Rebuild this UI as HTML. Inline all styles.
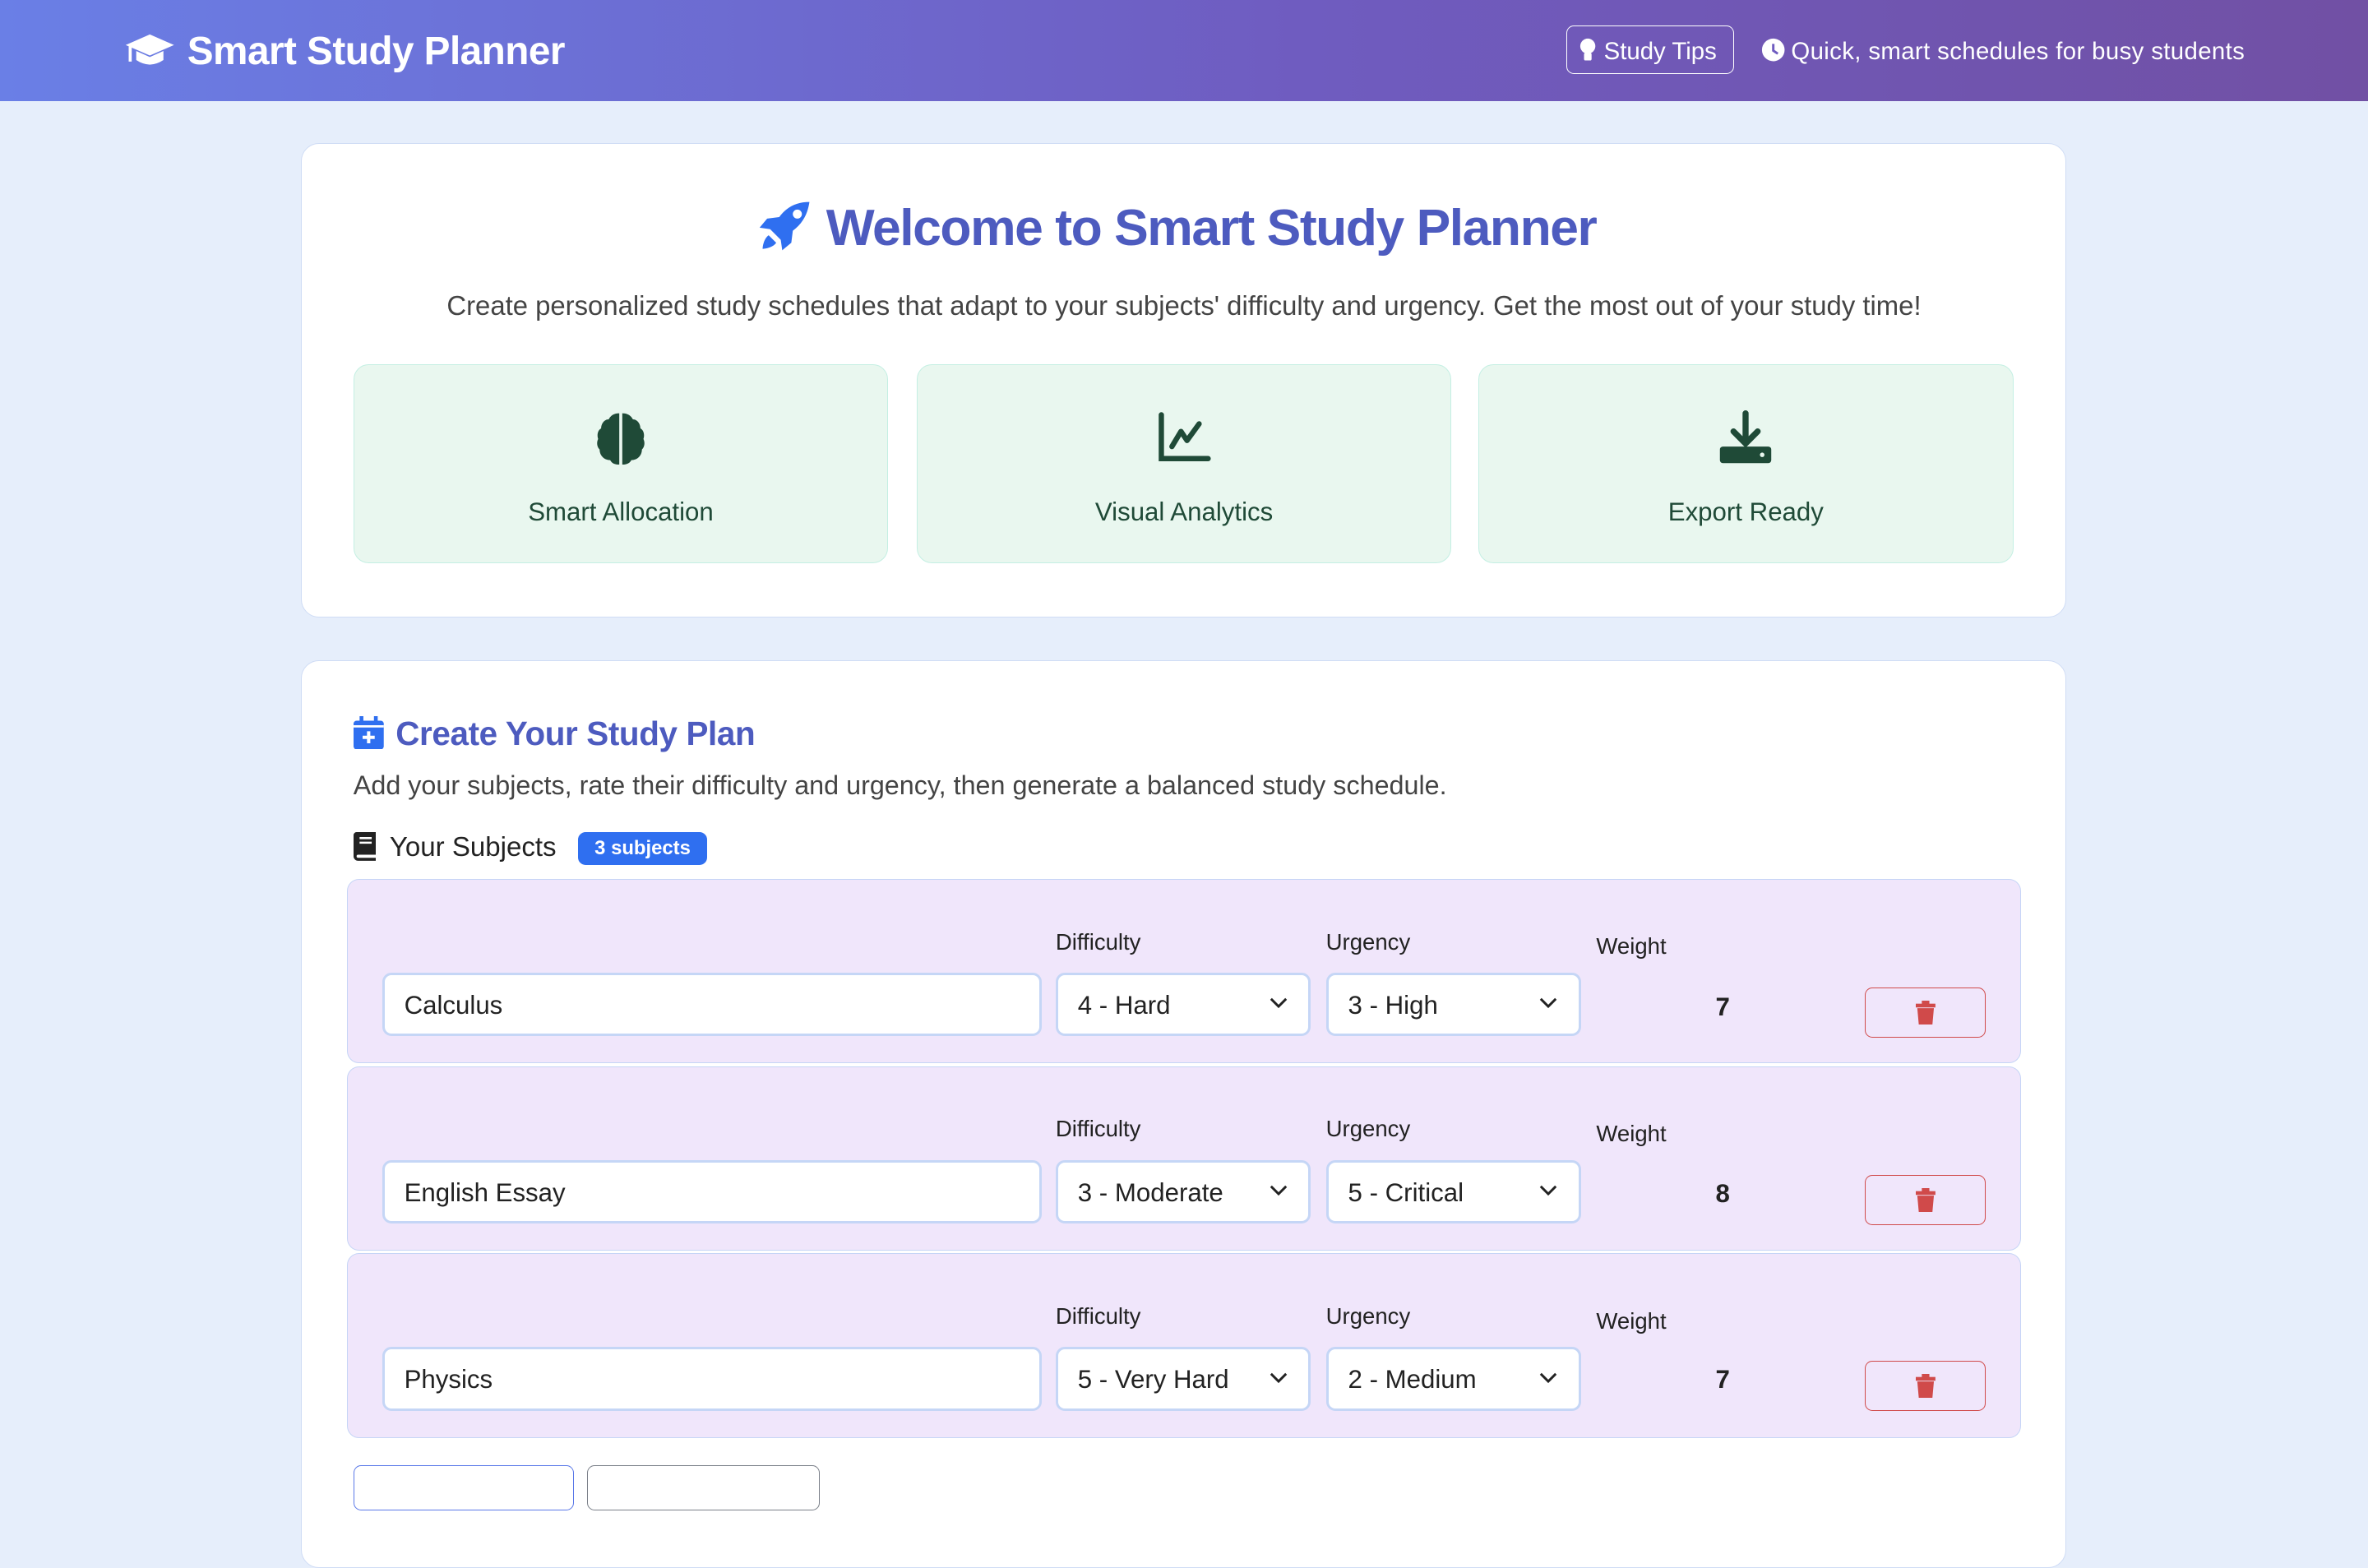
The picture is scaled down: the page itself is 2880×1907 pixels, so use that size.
<!DOCTYPE html>
<html><head><meta charset="utf-8"><style>
html{zoom:1.83674}
body{margin:0;width:1568px;height:980px;overflow:hidden;background:#e6eefb;font-family:"Liberation Sans",Arial,sans-serif;position:relative}
.a{position:absolute}
.hdr{left:0;top:0;width:1568px;height:67px;background:linear-gradient(90deg,#6a7fe6,#6f5cc0 55%,#7150a4);}
.card{background:#fff;border:1px solid #cfdcf5;border-radius:12px}
.feat{top:241px;width:353px;height:131px;background:#e9f7ef;border:1px solid #c4efe3;border-radius:10px;text-align:center;color:#1f4a37;font-size:17px}
.feat svg{position:absolute;left:50%;top:30px;transform:translateX(-50%)}
.feat span{position:absolute;left:0;right:0;top:88px}
.row{left:230px;width:1107px;height:121px;background:#f0e6fb;border:1px solid #c6d5f6;border-radius:8px}
.lbl{font-size:15px;color:#222}
.inp{height:42px;background:#fff;border:2px solid #c5d6f6;border-radius:6px;font-size:17px;color:#222;box-sizing:border-box;line-height:40px;padding-left:13px}
.chev{position:absolute;right:14px;top:15px}
.del{width:80px;height:33px;border:1px solid #d04a4a;border-radius:5px;box-sizing:border-box}
.del svg{position:absolute;left:33px;top:8px}
</style></head><body>
<div class="a hdr"></div>
<svg class="a" style="left:82px;top:22px" width="34" height="24" viewBox="0 0 34 24"><path d="M17 1 L33 8 L17 15 L1 8Z" fill="#fff"/><path d="M8 12 v6 q9 6 18 0 v-6 l-9 4z" fill="#fff"/><rect x="3" y="9" width="2" height="10" fill="#fff"/></svg>
<div class="a" style="left:124px;top:19px;color:#fff;font-size:26px;font-weight:bold;letter-spacing:-0.3px">Smart Study Planner</div>
<div class="a" style="left:1037px;top:17px;width:110px;height:31px;border:1px solid #fff;border-radius:5px"></div>
<svg class="a" style="left:1046px;top:25px" width="11" height="16" viewBox="0 0 11 16"><circle cx="5.5" cy="5.5" r="5" fill="#fff"/><rect x="3" y="10" width="5" height="5" rx="1" fill="#fff"/></svg>
<div class="a" style="left:1062px;top:25px;color:#fff;font-size:16px">Study Tips</div>
<svg class="a" style="left:1166px;top:25px" width="16" height="16"><circle cx="8" cy="8" r="7.5" fill="#fff"/><path d="M8 4v4.5l3 2" stroke="#6f5cc0" stroke-width="1.6" fill="none"/></svg>
<div class="a" style="left:1186px;top:25px;color:#fff;font-size:16px;letter-spacing:0.2px">Quick, smart schedules for busy students</div>

<div class="a card" style="left:199px;top:95px;width:1168px;height:313px"></div>
<svg class="a" style="left:502px;top:132px" width="36" height="36" viewBox="0 0 36 36"><path d="M34 2c-8 0-15 3-20 10l-8 1-5 6 7 1 7 7 1 7 6-5 1-8c7-5 10-12 11-19z" fill="#2f6ff0"/><circle cx="26" cy="10" r="3" fill="#fff"/><path d="M7 24c-3 2-4 7-4 9 2 0 7-1 9-4z" fill="#2f6ff0"/></svg>
<div class="a" style="left:547px;top:131px;color:#4d5bbf;font-size:34px;font-weight:bold;letter-spacing:-0.8px">Welcome to Smart Study Planner</div>
<div class="a" style="left:199px;width:1170px;top:192px;text-align:center;color:#444;font-size:17.9px">Create personalized study schedules that adapt to your subjects' difficulty and urgency. Get the most out of your study time!</div>
<div class="a feat" style="left:234px"><svg width="36" height="36" viewBox="0 0 36 36"><path d="M17 2c-4 0-6 2-7 4-3 0-5 3-5 6-2 1-3 4-2 7-1 2-1 5 1 7 0 4 3 7 7 7 1 2 3 3 6 3z M19 2c4 0 6 2 7 4 3 0 5 3 5 6 2 1 3 4 2 7 1 2 1 5-1 7 0 4-3 7-7 7-1 2-3 3-6 3z" fill="#1f4a37"/></svg><span>Smart Allocation</span></div>
<div class="a feat" style="left:607px"><svg width="36" height="36" viewBox="0 0 36 36"><path d="M3 3v29h31" stroke="#1f4a37" stroke-width="3.5" fill="none" stroke-linecap="round"/><path d="M10 24l6-10 4 6 8-11" stroke="#1f4a37" stroke-width="3.5" fill="none" stroke-linecap="round" stroke-linejoin="round"/></svg><span>Visual Analytics</span></div>
<div class="a feat" style="left:979px"><svg width="36" height="36" viewBox="0 0 36 36"><path d="M18 2v20M10 14l8 8 8-8" stroke="#1f4a37" stroke-width="4" fill="none" stroke-linecap="round"/><rect x="1" y="24" width="34" height="11" rx="2" fill="#1f4a37"/><circle cx="29" cy="29.5" r="1.5" fill="#e9f7ef"/></svg><span>Export Ready</span></div>

<div class="a card" style="left:199px;top:437px;width:1168px;height:600px"></div>
<svg class="a" style="left:234px;top:474px" width="20" height="22" viewBox="0 0 20 22"><rect x="0" y="3" width="20" height="19" rx="2" fill="#2f6ff0"/><rect x="4" y="0" width="2.5" height="5" fill="#2f6ff0"/><rect x="13.5" y="0" width="2.5" height="5" fill="#2f6ff0"/><rect x="0" y="6" width="20" height="1.5" fill="#fff"/><path d="M10 10v8M6 14h8" stroke="#fff" stroke-width="2.2"/></svg>
<div class="a" style="left:262px;top:473px;color:#4d5bbf;font-size:22px;font-weight:bold;letter-spacing:-0.2px">Create Your Study Plan</div>
<div class="a" style="left:234px;top:510px;color:#444;font-size:17.6px">Add your subjects, rate their difficulty and urgency, then generate a balanced study schedule.</div>
<svg class="a" style="left:234px;top:551px" width="15" height="19" viewBox="0 0 15 19"><path d="M2 0h13v15H3a1 1 0 000 2h12v2H3a3 3 0 01-3-3V2a2 2 0 012-2z" fill="#222"/><path d="M4 4h8M4 7h8" stroke="#fff" stroke-width="1.4"/></svg>
<div class="a" style="left:258px;top:551px;color:#222;font-size:18px">Your Subjects</div>
<div class="a" style="left:383px;top:551px;width:85px;height:22px;background:#2f6ff0;border-radius:5px;color:#fff;font-size:13px;font-weight:bold;text-align:center;line-height:22px">3 subjects</div>

<div class="a row" style="top:582px"></div>
<div class="a row" style="top:706px"></div>
<div class="a row" style="top:830px"></div>

<div class="a lbl" style="left:699px;top:615px">Difficulty</div><div class="a lbl" style="left:878px;top:615px">Urgency</div><div class="a lbl" style="left:1057px;top:618px">Weight</div>
<div class="a inp" style="left:253px;top:644px;width:437px">Calculus</div>
<div class="a inp" style="left:699px;top:644px;width:169px">4 - Hard<svg class="chev" width="12" height="8"><path d="M1 1l5 5 5-5" stroke="#222" stroke-width="1.6" fill="none"/></svg></div>
<div class="a inp" style="left:878px;top:644px;width:169px">3 - High<svg class="chev" width="12" height="8"><path d="M1 1l5 5 5-5" stroke="#222" stroke-width="1.6" fill="none"/></svg></div>
<div class="a" style="left:1136px;top:657px;font-size:17px;font-weight:bold;color:#222">7</div>
<div class="a del" style="left:1235px;top:654px"><svg width="13" height="16" viewBox="0 0 13 16"><rect x="0" y="2" width="13" height="2.5" fill="#d04a4a"/><rect x="4" y="0" width="5" height="3" fill="#d04a4a"/><path d="M1 5h11l-1 11H2z" fill="#d04a4a"/></svg></div>

<div class="a lbl" style="left:699px;top:739px">Difficulty</div><div class="a lbl" style="left:878px;top:739px">Urgency</div><div class="a lbl" style="left:1057px;top:742px">Weight</div>
<div class="a inp" style="left:253px;top:768px;width:437px">English Essay</div>
<div class="a inp" style="left:699px;top:768px;width:169px">3 - Moderate<svg class="chev" width="12" height="8"><path d="M1 1l5 5 5-5" stroke="#222" stroke-width="1.6" fill="none"/></svg></div>
<div class="a inp" style="left:878px;top:768px;width:169px">5 - Critical<svg class="chev" width="12" height="8"><path d="M1 1l5 5 5-5" stroke="#222" stroke-width="1.6" fill="none"/></svg></div>
<div class="a" style="left:1136px;top:781px;font-size:17px;font-weight:bold;color:#222">8</div>
<div class="a del" style="left:1235px;top:778px"><svg width="13" height="16" viewBox="0 0 13 16"><rect x="0" y="2" width="13" height="2.5" fill="#d04a4a"/><rect x="4" y="0" width="5" height="3" fill="#d04a4a"/><path d="M1 5h11l-1 11H2z" fill="#d04a4a"/></svg></div>

<div class="a lbl" style="left:699px;top:863px">Difficulty</div><div class="a lbl" style="left:878px;top:863px">Urgency</div><div class="a lbl" style="left:1057px;top:866px">Weight</div>
<div class="a inp" style="left:253px;top:892px;width:437px">Physics</div>
<div class="a inp" style="left:699px;top:892px;width:169px">5 - Very Hard<svg class="chev" width="12" height="8"><path d="M1 1l5 5 5-5" stroke="#222" stroke-width="1.6" fill="none"/></svg></div>
<div class="a inp" style="left:878px;top:892px;width:169px">2 - Medium<svg class="chev" width="12" height="8"><path d="M1 1l5 5 5-5" stroke="#222" stroke-width="1.6" fill="none"/></svg></div>
<div class="a" style="left:1136px;top:904px;font-size:17px;font-weight:bold;color:#222">7</div>
<div class="a del" style="left:1235px;top:901px"><svg width="13" height="16" viewBox="0 0 13 16"><rect x="0" y="2" width="13" height="2.5" fill="#d04a4a"/><rect x="4" y="0" width="5" height="3" fill="#d04a4a"/><path d="M1 5h11l-1 11H2z" fill="#d04a4a"/></svg></div>

<div class="a" style="left:234px;top:970px;width:146px;height:30px;border:1px solid #5a78e8;border-radius:5px;box-sizing:border-box"></div>
<div class="a" style="left:389px;top:970px;width:154px;height:30px;border:1px solid #7a7f88;border-radius:5px;box-sizing:border-box"></div>
</body></html>
